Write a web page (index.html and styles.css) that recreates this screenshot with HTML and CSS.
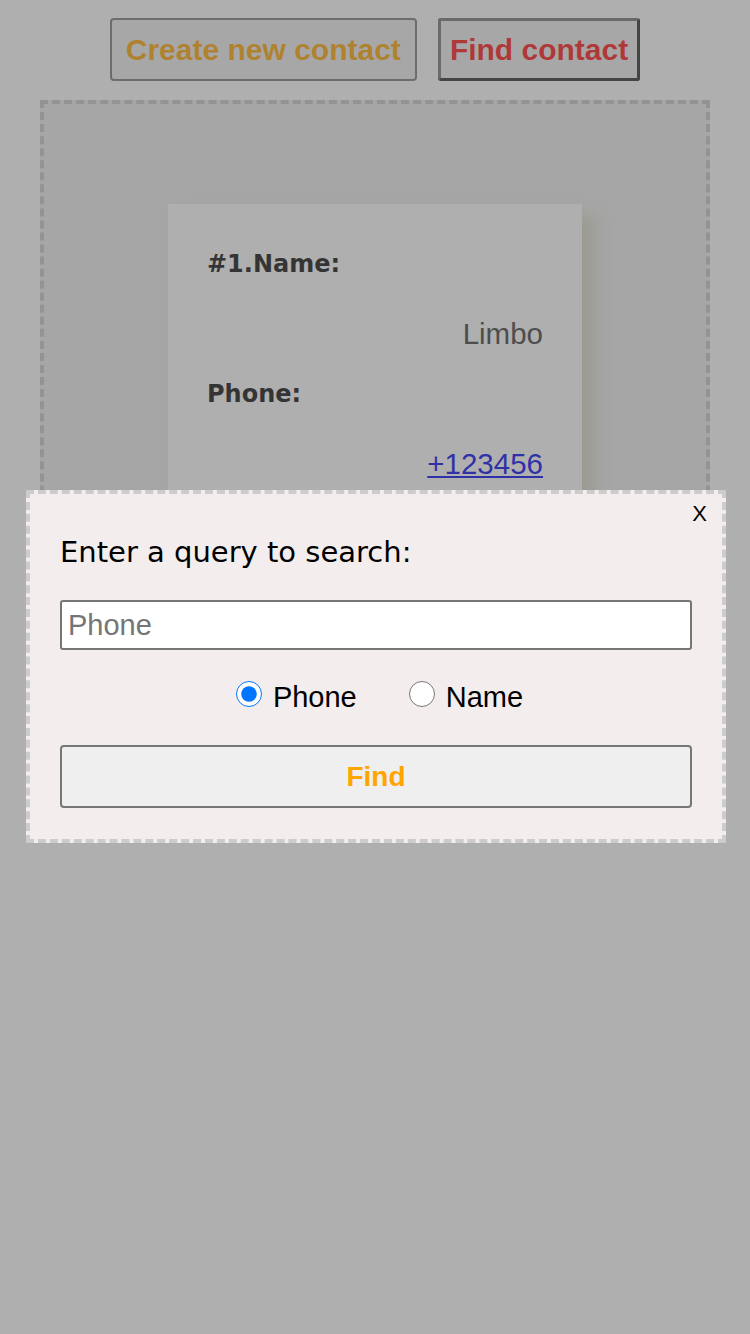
FILE: index.html
```html
<!DOCTYPE html>
<html lang="en">
<head>
<meta charset="utf-8">
<title>Contacts</title>
<link rel="stylesheet" href="styles.css">
</head>
<body>
  <header class="toolbar">
    <button class="btn btn-create" type="button">Create new contact</button>
    <button class="btn btn-find" type="button">Find contact</button>
  </header>

  <main class="board">
    <article class="card">
      <div class="card-label">#1.Name:</div>
      <div class="card-value">Limbo</div>
      <div class="card-label">Phone:</div>
      <div class="card-value"><a href="#" class="card-link">+123456</a></div>
    </article>
  </main>

  <div class="backdrop"></div>

  <section class="modal">
    <span class="modal-close">X</span>
    <div class="modal-title">Enter a query to search:</div>
    <input class="modal-input" type="text" placeholder="Phone">
    <div class="modal-radios">
      <label class="radio-item"><input class="radio" type="radio" name="by" checked><span>Phone</span></label>
      <label class="radio-item"><input class="radio" type="radio" name="by"><span>Name</span></label>
    </div>
    <button class="modal-find" type="button">Find</button>
  </section>
</body>
</html>
```

FILE: styles.css
```css
html, body {
  margin: 0;
  padding: 0;
  background: #ffffff;
}

body {
  min-height: 1334px;
  font-family: "Liberation Sans", Arial, sans-serif;
}

.toolbar {
  display: flex;
  justify-content: center;
  gap: 21px;
  padding-top: 18px;
}

.btn {
  box-sizing: border-box;
  height: 63px;
  background: #efefef;
  font-family: "Liberation Sans", Arial, sans-serif;
  font-weight: bold;
  font-size: 30px;
  line-height: 1;
  cursor: pointer;
}

.btn-create {
  border: 2px solid #7a7a7a;
  border-radius: 4px;
  padding: 0 14px;
  color: #ffa500;
}

.btn-find {
  border: 3px solid;
  border-color: #747474 #282828 #282828 #747474;
  border-radius: 3px;
  padding: 0 9px;
  color: #ff1010;
}

.board {
  margin: 19px 40px 0;
  border: 4px dashed #c6c6c6;
  background: #ececec;
  padding: 100px 0 110px;
}

.card {
  box-sizing: border-box;
  width: 414px;
  margin: 0 auto;
  background: #fefefe;
  padding: 42px 39px 42px;
  box-shadow: 12px 12px 16px rgba(170, 170, 110, 0.35);
}

.card-label {
  font-family: "DejaVu Sans", sans-serif;
  font-weight: bold;
  font-size: 24px;
  line-height: 36px;
  color: #080808;
  margin-bottom: 34px;
}

.card-value {
  font-family: "Liberation Sans", Arial, sans-serif;
  font-size: 29.5px;
  line-height: 36px;
  text-align: right;
  color: #3a3a3a;
  margin-bottom: 24px;
}

.card-value:last-child {
  margin-bottom: 0;
}

.card-link {
  color: #0000ee;
  text-decoration: underline;
}

.backdrop {
  position: fixed;
  inset: 0;
  background: rgba(96, 96, 96, 0.5);
}

.modal {
  position: fixed;
  left: 26px;
  top: 490px;
  box-sizing: border-box;
  width: 700px;
  background: #f3eded;
  border: 4px dashed #cccccc;
  padding: 41px 30px 31px;
  display: flex;
  flex-direction: column;
  gap: 31px;
}

.modal-close {
  position: absolute;
  top: 7px;
  right: 15px;
  font-family: "Liberation Sans", Arial, sans-serif;
  font-size: 22px;
  color: #000;
  cursor: pointer;
}

.modal-title {
  font-family: "DejaVu Sans", sans-serif;
  font-size: 29px;
  color: #000;
}

.modal-input {
  box-sizing: border-box;
  width: 100%;
  height: 50px;
  margin: 0;
  border: 2px solid #767676;
  border-radius: 3px;
  padding: 0 6px;
  background: #fff;
  font-family: "Liberation Sans", Arial, sans-serif;
  font-size: 29px;
  color: #000;
}

.modal-input::placeholder {
  color: #757575;
}

.modal-radios {
  display: flex;
  justify-content: center;
  align-items: center;
  gap: 52px;
  padding-left: 7px;
  font-family: "Liberation Sans", Arial, sans-serif;
  font-size: 29px;
  color: #000;
}

.radio-item {
  display: flex;
  align-items: center;
  gap: 11px;
}

.radio {
  width: 26px;
  height: 26px;
  margin: 0 0 7px 0;
}

.modal-find {
  box-sizing: border-box;
  width: 100%;
  height: 63px;
  margin: 0;
  border: 2px solid #767676;
  border-radius: 4px;
  background: #efefef;
  font-family: "Liberation Sans", Arial, sans-serif;
  font-weight: bold;
  font-size: 28px;
  color: #ffa500;
  cursor: pointer;
}
```
